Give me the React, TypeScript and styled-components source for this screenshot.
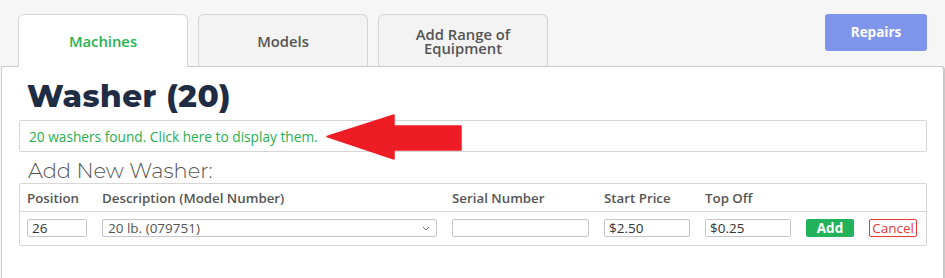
import styled, { createGlobalStyle } from 'styled-components';

const GlobalStyle = createGlobalStyle`
  html, body {
    margin: 0;
    padding: 0;
    background: #f6f6f6;
    font-family: "Open Sans", "Liberation Sans", sans-serif;
  }
`;

type TabProps = { $active?: boolean };

export default function App() {
  return (
    <>
      <GlobalStyle />
      <Page>
        <TopBar>
          <Tabs>
            <Tab $active>Machines</Tab>
            <Tab>Models</Tab>
            <Tab>
              <TabLine>Add Range of</TabLine>
              <TabLine>Equipment</TabLine>
            </Tab>
          </Tabs>
          <RepairsButton>Repairs</RepairsButton>
        </TopBar>
        <Panel>
          <Title>Washer (20)</Title>
          <InfoRow>
            <InfoBox>20 washers found. Click here to display them.</InfoBox>
            <Arrow width="137" height="46" viewBox="0 0 137 46">
              <path d="M1 22.5 L68 1 L68 12 L135 12 L135 36 L68 36 L68 45 Z" fill="#ee1c25" stroke="#ee1c25" strokeWidth="1.5" strokeLinejoin="round" />
            </Arrow>
          </InfoRow>
          <SubTitle>Add New Washer:</SubTitle>
          <TableBox>
            <Grid>
              <Head>Position</Head>
              <Head>Description (Model Number)</Head>
              <Head>Serial Number</Head>
              <Head>Start Price</Head>
              <Head>Top Off</Head>
              <Head />
              <Head />
            </Grid>
            <BodyGrid>
              <Field defaultValue="26" />
              <SelectBox>
                <span>20 lb. (079751)</span>
                <svg width="8" height="5" viewBox="0 0 8 5">
                  <path d="M1 1 L4 4 L7 1" fill="none" stroke="#777" strokeWidth="1" />
                </svg>
              </SelectBox>
              <Field defaultValue="" />
              <Field defaultValue="$2.50" />
              <Field defaultValue="$0.25" />
              <AddButton>Add</AddButton>
              <CancelButton>Cancel</CancelButton>
            </BodyGrid>
          </TableBox>
        </Panel>
      </Page>
    </>
  );
}

const Page = styled.div`
  width: 945px;
  height: 278px;
  display: flex;
  flex-direction: column;
  overflow: hidden;
`;

const TopBar = styled.div`
  display: flex;
  justify-content: space-between;
  align-items: flex-start;
  padding: 14px 18px 0 18px;
  height: 52px;
`;

const Tabs = styled.div`
  display: flex;
  gap: 10px;
`;

const Tab = styled.div<TabProps>`
  width: 170px;
  height: ${p => (p.$active ? '53px' : '52px')};
  box-sizing: border-box;
  display: flex;
  flex-direction: column;
  align-items: center;
  justify-content: center;
  text-align: center;
  border: 1px solid #d4d4d4;
  border-bottom: none;
  border-radius: 6px 6px 0 0;
  background: ${p => (p.$active ? '#fff' : '#f3f3f3')};
  color: ${p => (p.$active ? '#26b34f' : '#555')};
  font-size: 14.8px;
  font-weight: 600;
  line-height: 16px;
  position: relative;
  z-index: 1;
`;

const TabLine = styled.span`
  display: block;
  height: 14px;
  line-height: 14px;
`;

const RepairsButton = styled.button`
  all: unset;
  width: 102px;
  height: 37px;
  border-radius: 3px;
  background: #7f95ec;
  color: #fff;
  font-size: 13.5px;
  font-weight: 700;
  text-align: center;
  line-height: 37px;
`;

const Panel = styled.div`
  flex: 1;
  background: #fff;
  border: 1px solid #c9c9c9;
  border-right-width: 2px;
  border-bottom: none;
  border-radius: 0 4px 0 0;
  margin-left: 1px;
  padding: 10px 16px 0 17px;
`;

const Title = styled.h1`
  margin: 0;
  font-family: "Montserrat", "Inter", sans-serif;
  font-weight: 800;
  font-size: 31px;
  line-height: 38px;
  color: #1f2d44;
  padding-left: 8px;
  letter-spacing: 0.5px;
`;

const InfoRow = styled.div`
  position: relative;
  margin-top: 5px;
`;

const InfoBox = styled.div`
  height: 32px;
  box-sizing: border-box;
  border: 1px solid #d6d6d6;
  border-radius: 2px;
  padding-left: 9px;
  display: flex;
  align-items: center;
  color: #27b050;
  font-size: 13.7px;
  font-weight: 500;
`;

const Arrow = styled.svg`
  position: absolute;
  left: 307px;
  top: -6px;
`;

const SubTitle = styled.div`
  margin-top: 7px;
  padding-left: 9px;
  font-family: "Montserrat", "Inter", sans-serif;
  font-weight: 300;
  font-size: 21px;
  line-height: 24px;
  color: #555;
`;

const TableBox = styled.div`
  border: 1px solid #d6d6d6;
  border-radius: 2px;
  height: 63px;
  box-sizing: border-box;
`;

const columns = '75px 350px 152px 101px 101px 63px auto';

const Grid = styled.div`
  display: grid;
  grid-template-columns: ${columns};
  align-items: center;
  height: 27px;
  padding-left: 7px;
  border-bottom: 1px solid #d6d6d6;
`;

const Head = styled.div`
  font-size: 13.3px;
  font-weight: 600;
  color: #555;
`;

const BodyGrid = styled.div`
  display: grid;
  grid-template-columns: ${columns};
  align-items: center;
  padding: 7px 0 0 7px;
`;

const Field = styled.input`
  box-sizing: border-box;
  width: calc(100% - 15px);
  height: 18px;
  border: 1px solid #c6c6c6;
  border-radius: 2px;
  padding: 0 4px;
  font-family: "Open Sans", sans-serif;
  font-size: 13.5px;
  color: #333;
  outline: none;
`;

const SelectBox = styled.div`
  box-sizing: border-box;
  width: calc(100% - 15px);
  height: 18px;
  border: 1px solid #c6c6c6;
  border-radius: 2px;
  padding: 0 6px 0 5px;
  display: flex;
  align-items: center;
  justify-content: space-between;
  font-size: 13.5px;
  color: #555;
`;

const AddButton = styled.button`
  all: unset;
  width: 48px;
  height: 18px;
  border-radius: 2px;
  background: #22b35a;
  color: #fff;
  font-size: 13.5px;
  font-weight: 700;
  text-align: center;
  line-height: 18px;
`;

const CancelButton = styled.button`
  all: unset;
  box-sizing: border-box;
  width: 48px;
  height: 18px;
  border: 1px solid #e53935;
  border-radius: 2px;
  color: #e53935;
  font-size: 13.5px;
  text-align: center;
  line-height: 16px;
`;
